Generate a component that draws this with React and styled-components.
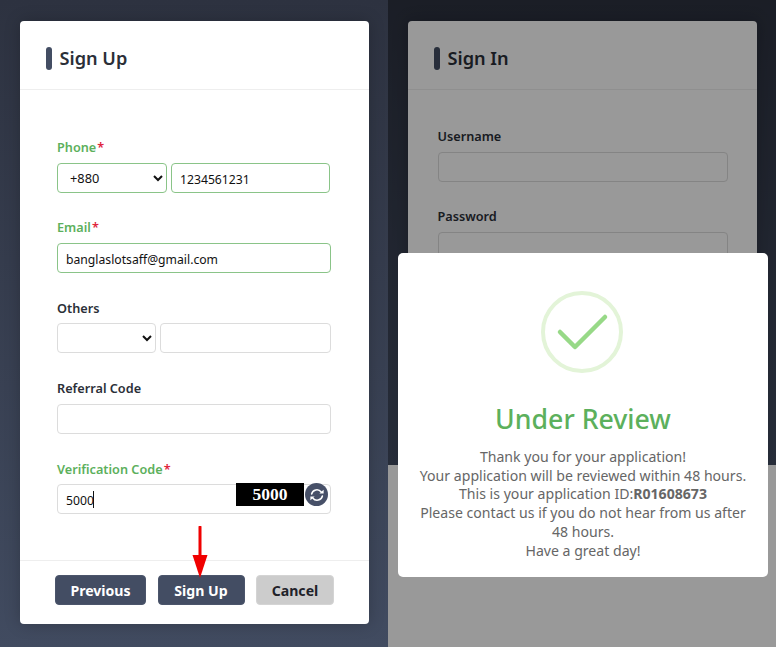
import React from 'react';
import styled, { createGlobalStyle } from 'styled-components';

const Global = createGlobalStyle`
  html, body { margin: 0; padding: 0; background: #fff; }
  body { font-family: "Noto Sans", "Open Sans", sans-serif; }
  * { box-sizing: border-box; }
`;

const Page = styled.div`
  display: flex;
  width: 776px;
  height: 647px;
  overflow: hidden;
`;

const Backdrop = styled.div`
  width: 388px;
  height: ${(p) => p.$height}px;
  padding: 21px 19px 0 19.5px;
  overflow: hidden;
  background: linear-gradient(180deg, #2d3240 0%, #414b60 100%);
`;

const Card = styled.div`
  position: relative;
  display: flex;
  flex-direction: column;
  width: 349.5px;
  height: ${(p) => p.$height}px;
  background: #fff;
  border-radius: 4px;
  box-shadow: 0 0 16px rgba(0, 0, 0, 0.22);
`;

const CardHeader = styled.div`
  display: flex;
  align-items: center;
  gap: 8px;
  height: 69px;
  padding: 14px 0 8px 26px;
  border-bottom: 1px solid #eeeeee;
`;

const Bar = styled.span`
  width: 6px;
  height: 23px;
  border-radius: 3px;
  background: #434d63;
`;

const Title = styled.h2`
  margin: 0;
  font-size: 18.2px;
  font-weight: 600;
  color: #2b2f38;
`;

const CardBody = styled.div`
  flex: 1;
  padding: ${(p) => p.$top}px ${(p) => p.$side}px 0;
`;

const Field = styled.div`
  height: 80.4px;
`;

const Label = styled.div`
  height: 17px;
  margin-bottom: 6.5px;
  font-size: 12.7px;
  line-height: 17px;
  font-weight: 600;
  color: ${(p) => (p.$ok ? '#5cb05c' : '#2b2f38')};
`;

const Star = styled.span`
  margin-left: 1px;
  color: #e0243c;
`;

const Row = styled.div`
  display: flex;
  gap: 4px;
  width: ${(p) => p.$width || 274}px;
`;

const Input = styled.input`
  flex: 1;
  min-width: 0;
  width: 100%;
  height: 30px;
  padding: 3px 8px 0;
  font-family: inherit;
  font-size: 12.2px;
  color: #111;
  background: #fff;
  border: 1px solid ${(p) => (p.$ok ? '#8ac488' : '#dcdcdc')};
  border-radius: 4px;
  outline: none;
`;

const Select = styled.select`
  flex: none;
  width: ${(p) => p.$width}px;
  height: 30px;
  padding: 1px 0 0 8px;
  font-family: inherit;
  font-size: 12.8px;
  color: #111;
  background: #fff;
  border: 1px solid ${(p) => (p.$ok ? '#8ac488' : '#dcdcdc')};
  border-radius: 4px;
  outline: none;
`;

const CodeWrap = styled.div`
  position: relative;
  width: 274px;
  margin-top: 1px;
`;

const Caret = styled.span`
  position: absolute;
  left: 36px;
  top: 7px;
  width: 1px;
  height: 17px;
  background: #111;
`;

const Captcha = styled.div`
  position: absolute;
  top: -1px;
  right: 27px;
  width: 68px;
  height: 23px;
  background: #000;
  color: #fff;
  font-family: "Liberation Serif", serif;
  font-size: 17.5px;
  font-weight: 700;
  line-height: 23px;
  text-align: center;
`;

const Refresh = styled.div`
  position: absolute;
  top: -1px;
  right: 3px;
  display: flex;
  align-items: center;
  justify-content: center;
  width: 23px;
  height: 23px;
  border-radius: 50%;
  background: #475068;
`;

const CardFooter = styled.div`
  display: flex;
  height: 64px;
  padding: 14px 0 0 35.5px;
  gap: 11.5px;
  border-top: 1px solid #eeeeee;
`;

const Button = styled.button`
  width: ${(p) => p.$width}px;
  height: 30px;
  padding: 1px 0 0;
  font-family: inherit;
  font-size: 14.1px;
  font-weight: 700;
  color: ${(p) => (p.$muted ? '#1f2229' : '#fff')};
  background: ${(p) => (p.$muted ? '#cccccc' : '#434d63')};
  border: 1px solid ${(p) => (p.$muted ? '#d4d4d4' : '#4b556b')};
  border-radius: 4px;
`;

const Arrow = styled.svg`
  position: absolute;
  left: 172px;
  top: 505px;
`;

const Side = styled.div`
  position: relative;
  width: 388px;
  height: 647px;
  background: #fff;
`;

const Overlay = styled.div`
  position: absolute;
  inset: 0;
  background: rgba(0, 0, 0, 0.4);
`;

const Modal = styled.div`
  position: absolute;
  left: 10px;
  top: 253px;
  width: 370px;
  height: 324px;
  padding: 38px 20px 0;
  text-align: center;
  background: #fff;
  border-radius: 5px;
`;

const Check = styled.svg`
  display: block;
  margin: 0 auto;
`;

const ModalTitle = styled.h2`
  margin: 29px 0 12px;
  font-size: 26.7px;
  line-height: 34px;
  font-weight: 500;
  color: #5cb05c;
`;

const Message = styled.div`
  font-size: 14.1px;
  line-height: 18.7px;
  color: #666;
`;

const SyncIcon = () => (
  <svg width="16" height="16" viewBox="0 0 16 16" fill="none">
    <g id="half">
      <path d="M2.6 7A5.4 5.4 0 0 1 12.2 5" stroke="#fff" strokeWidth="1.5" strokeLinecap="round" />
      <path d="M10.4 6.6H14.6V2.8Z" fill="#fff" />
    </g>
    <use href="#half" transform="rotate(180 8 8)" />
  </svg>
);

const App = () => (
  <Page>
    <Global />
    <Backdrop $height={647}>
      <Card $height={603}>
        <CardHeader>
          <Bar />
          <Title>Sign Up</Title>
        </CardHeader>
        <CardBody $top={49} $side={37.5}>
          <Field>
            <Label $ok>Phone<Star>*</Star></Label>
            <Row $width={273}>
              <Select $ok $width={110} defaultValue="+880">
                <option>+880</option>
              </Select>
              <Input $ok readOnly value="1234561231" />
            </Row>
          </Field>
          <Field>
            <Label $ok>Email<Star>*</Star></Label>
            <Row><Input $ok readOnly value="banglaslotsaff@gmail.com" /></Row>
          </Field>
          <Field>
            <Label>Others</Label>
            <Row>
              <Select $width={99} defaultValue=""><option value="" /></Select>
              <Input readOnly value="" />
            </Row>
          </Field>
          <Field>
            <Label>Referral Code</Label>
            <Row><Input readOnly value="" /></Row>
          </Field>
          <Field>
            <Label $ok>Verification Code<Star>*</Star></Label>
            <CodeWrap>
              <Input readOnly value="5000" />
              <Caret />
              <Captcha>5000</Captcha>
              <Refresh><SyncIcon /></Refresh>
            </CodeWrap>
          </Field>
        </CardBody>
        <CardFooter>
          <Button $width={91}>Previous</Button>
          <Button $width={87}>Sign Up</Button>
          <Button $muted $width={78}>Cancel</Button>
        </CardFooter>
        <Arrow width="16" height="52" viewBox="0 0 16 52">
          <path d="M8 1V32" stroke="#f00000" strokeWidth="3" strokeLinecap="round" fill="none" />
          <path d="M0.5 29H15.5L8 52Z" fill="#f00000" />
        </Arrow>
      </Card>
    </Backdrop>
    <Side>
      <Backdrop $height={465}>
        <Card $height={444}>
          <CardHeader>
            <Bar />
            <Title>Sign In</Title>
          </CardHeader>
          <CardBody $top={38} $side={30}>
            <Field>
              <Label>Username</Label>
              <Row $width={290}><Input readOnly value="" /></Row>
            </Field>
            <Field>
              <Label>Password</Label>
              <Row $width={290}><Input readOnly value="" /></Row>
            </Field>
          </CardBody>
        </Card>
      </Backdrop>
      <Overlay />
      <Modal>
        <Check width="84" height="82" viewBox="0 0 84 82">
          <circle cx="41" cy="41" r="39" fill="none" stroke="#e3f4d8" strokeWidth="4" />
          <path d="M19 41L34 56L64 26" fill="none" stroke="#97d987" strokeWidth="4.5" strokeLinecap="round" strokeLinejoin="round" />
        </Check>
        <ModalTitle>Under Review</ModalTitle>
        <Message>
          Thank you for your application!<br />
          Your application will be reviewed within 48 hours.<br />
          This is your application ID:<b>R01608673</b><br />
          Please contact us if you do not hear from us after 48 hours.<br />
          Have a great day!
        </Message>
      </Modal>
    </Side>
  </Page>
);

export default App;
